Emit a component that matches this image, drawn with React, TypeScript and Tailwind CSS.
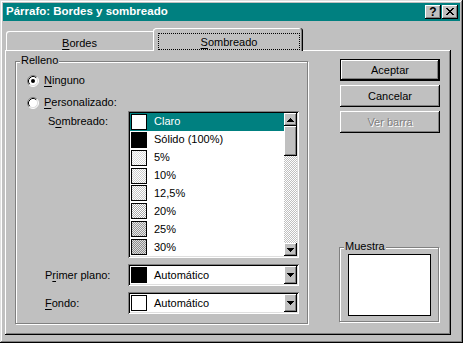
import React from "react";

const raised = "shadow-[inset_-1px_-1px_#000,inset_1px_1px_#fff,inset_-2px_-2px_#808080]";
const sunken = "shadow-[inset_1px_1px_#808080,inset_-1px_-1px_#fff,inset_2px_2px_#000,inset_-2px_-2px_#dfdfdf]";
const etched = "border border-[#808080] shadow-[inset_1px_1px_#fff,1px_1px_#fff]";

function Radio({ checked }: { checked?: boolean }) {
  return (
    <svg width="12" height="12" viewBox="0 0 12 12" className="shrink-0">
      <circle cx="6" cy="6" r="5" fill="#fff" />
      <path d="M2.11 9.89 A5.5 5.5 0 0 1 9.89 2.11" stroke="#808080" fill="none" />
      <path d="M9.89 2.11 A5.5 5.5 0 0 1 2.11 9.89" stroke="#fff" fill="none" />
      <path d="M2.82 9.18 A4.5 4.5 0 0 1 9.18 2.82" stroke="#000" fill="none" />
      <path d="M9.18 2.82 A4.5 4.5 0 0 1 2.82 9.18" stroke="#dfdfdf" fill="none" />
      {checked && <circle cx="6" cy="6" r="2" fill="#000" />}
    </svg>
  );
}

function Tri({ down }: { down?: boolean }) {
  return (
    <svg width="7" height="4" viewBox="0 0 7 4" shapeRendering="crispEdges">
      {down ? <polygon points="0,0 7,0 3.5,4" fill="#000" /> : <polygon points="3.5,0 7,4 0,4" fill="#000" />}
    </svg>
  );
}

function CloseGlyph() {
  const rows = ["XX....XX", ".XX..XX.", "..XXXX..", "...XX...", "..XXXX..", ".XX..XX.", "XX....XX"];
  return (
    <svg width="8" height="7" viewBox="0 0 8 7" shapeRendering="crispEdges">
      {rows.map((r, y) =>
        r.split("").map((c, x) => (c === "X" ? <rect key={`${x}-${y}`} x={x} y={y} width="1" height="1" fill="#000" /> : null))
      )}
    </svg>
  );
}

function U({ children }: { children: React.ReactNode }) {
  return <span className="underline underline-offset-[2px] decoration-[1px]">{children}</span>;
}

const items: { label: string; fill: string }[] = [
  { label: "Claro", fill: "bg-white" },
  { label: "Sólido (100%)", fill: "bg-black" },
  { label: "5%", fill: "bg-[repeating-conic-gradient(#d8d8d8_0_25%,#fff_0_50%)] bg-[length:2px_2px]" },
  { label: "10%", fill: "bg-[repeating-conic-gradient(#cccccc_0_25%,#fff_0_50%)] bg-[length:2px_2px]" },
  { label: "12,5%", fill: "bg-[repeating-conic-gradient(#c4c4c4_0_25%,#fff_0_50%)] bg-[length:2px_2px]" },
  { label: "20%", fill: "bg-[repeating-conic-gradient(#a8a8a8_0_25%,#fff_0_50%)] bg-[length:2px_2px]" },
  { label: "25%", fill: "bg-[repeating-conic-gradient(#989898_0_25%,#e8e8e8_0_50%)] bg-[length:2px_2px]" },
  { label: "30%", fill: "bg-[repeating-conic-gradient(#8c8c8c_0_25%,#dcdcdc_0_50%)] bg-[length:2px_2px]" },
];

function Swatch({ fill }: { fill: string }) {
  return <div className={`w-[16px] h-[16px] border border-black shrink-0 ${fill}`} />;
}

function Combo({ fill }: { fill: string }) {
  return (
    <div className={`w-[171px] h-[22px] bg-white p-[2px] flex items-stretch ${sunken}`}>
      <div className="flex-1 flex items-center pl-[1px]">
        <Swatch fill={fill} />
        <span className="ml-[7px] leading-[13px]">Automático</span>
      </div>
      <div className={`w-[13px] bg-[#c0c0c0] flex items-center justify-center ${raised}`}>
        <Tri down />
      </div>
    </div>
  );
}

export default function App() {
  return (
    <div className="w-[463px] h-[343px] bg-[#c0c0c0] p-[3px] flex flex-col font-['Liberation_Sans',Arial,sans-serif] text-[11px] text-black shadow-[inset_-1px_-1px_#000,inset_1px_1px_#dfdfdf,inset_-2px_-2px_#808080,inset_2px_2px_#fff] overflow-hidden">
      {/* Title bar */}
      <div className="h-[18px] bg-[#008080] flex items-center pl-[3px] pr-[2px] shrink-0">
        <span className="text-white font-bold text-[11.5px] leading-none">Párrafo: Bordes y sombreado</span>
        <div className="ml-auto flex">
          <div className={`w-[16px] h-[14px] bg-[#c0c0c0] flex items-center justify-center font-bold text-[12px] leading-none pb-[1px] ${raised}`}>?</div>
          <div className={`ml-[1px] w-[16px] h-[14px] bg-[#c0c0c0] flex items-center justify-center pb-[1px] ${raised}`}>
            <CloseGlyph />
          </div>
        </div>
      </div>

      {/* Tabs */}
      <div className="relative z-10 flex items-end h-[22px] mt-[7px] ml-[3px] shrink-0">
        <div className="w-[147px] h-[19px] rounded-tl-[3px] shadow-[inset_1px_1px_#fff] flex items-center justify-center pt-[5px]">
          <span className="leading-[13px]"><U>B</U>ordes</span>
        </div>
        <div className="w-[150px] h-[23px] -mb-[1px] bg-[#c0c0c0] rounded-t-[3px] shadow-[inset_-1px_0_#000,inset_1px_1px_#fff,inset_-2px_0_#808080] pl-[5px] pt-[5px]">
          <div className="w-[142px] h-[17px] border border-dotted border-black flex items-center justify-center pt-[2px]">
            <span className="leading-[13px]"><U>S</U>ombreado</span>
          </div>
        </div>
      </div>

      {/* Panel */}
      <div className="ml-[2px] w-[446px] h-[285px] shrink-0 shadow-[inset_-1px_-1px_#000,inset_1px_1px_#fff,inset_-2px_-2px_#808080] flex items-start pl-[10px] pt-[9px]">
        {/* Relleno group */}
        <div className={`relative mt-[2px] w-[293px] h-[263px] shrink-0 ${etched} pl-[11px] pt-[12px] flex flex-col`}>
          <span className="absolute -top-[8px] left-[4px] px-[1px] bg-[#c0c0c0] leading-[13px]">Relleno</span>

          <div className="h-[13px] flex items-center gap-[5px]">
            <Radio checked />
            <span className="leading-[13px]"><U>N</U>inguno</span>
          </div>
          <div className="mt-[9px] h-[13px] flex items-center gap-[5px]">
            <Radio />
            <span className="leading-[13px]"><U>P</U>ersonalizado:</span>
          </div>

          <div className="mt-[2px] flex">
            <div className="ml-[21px] w-[80px] pt-[4px] leading-[13px]">S<U>o</U>mbreado:</div>
            <div className={`w-[171px] h-[147px] bg-white p-[2px] flex ${sunken}`}>
              <div className="flex-1 flex flex-col">
                {items.map((it, i) => (
                  <div key={it.label} className={`h-[18px] flex items-center pl-[1px] ${i === 0 ? "bg-[#008080] text-white" : ""}`}>
                    <Swatch fill={it.fill} />
                    <span className="ml-[7px] leading-[13px]">{it.label}</span>
                  </div>
                ))}
              </div>
              <div className="w-[13px] flex flex-col bg-[repeating-conic-gradient(#fff_0_25%,#c0c0c0_0_50%)] bg-[length:2px_2px]">
                <div className={`h-[13px] bg-[#c0c0c0] flex items-center justify-center ${raised}`}>
                  <Tri />
                </div>
                <div className={`h-[30px] bg-[#c0c0c0] ${raised}`} />
                <div className="flex-1" />
                <div className={`h-[13px] bg-[#c0c0c0] flex items-center justify-center ${raised}`}>
                  <Tri down />
                </div>
              </div>
            </div>
          </div>

          <div className="mt-[6px] flex items-center">
            <div className="ml-[18px] w-[83px] leading-[13px]">P<U>r</U>imer plano:</div>
            <Combo fill="bg-black" />
          </div>
          <div className="mt-[6px] flex items-center">
            <div className="ml-[18px] w-[83px] leading-[13px]"><U>F</U>ondo:</div>
            <Combo fill="bg-white" />
          </div>
        </div>

        {/* Right column */}
        <div className="ml-[32px] w-[100px] h-[263px] flex flex-col shrink-0">
          <div className={`h-[22px] border border-black flex items-center justify-center ${raised}`}>
            <span className="leading-[13px]">Aceptar</span>
          </div>
          <div className={`mt-[4px] h-[22px] flex items-center justify-center ${raised}`}>
            <span className="leading-[13px]">Cancelar</span>
          </div>
          <div className={`mt-[4px] h-[22px] flex items-center justify-center ${raised}`}>
            <span className="leading-[13px] text-[#808080] [text-shadow:1px_1px_0_#fff]">Ver barra</span>
          </div>

          <div className={`relative mt-auto -ml-[1px] w-[100px] h-[75px] ${etched}`}>
            <span className="absolute -top-[8px] left-[4px] px-[1px] bg-[#c0c0c0] leading-[13px]">Muestra</span>
            <div className="ml-[8px] mt-[6px] w-[83px] h-[62px] bg-white border border-black" />
          </div>
        </div>
      </div>
    </div>
  );
}
